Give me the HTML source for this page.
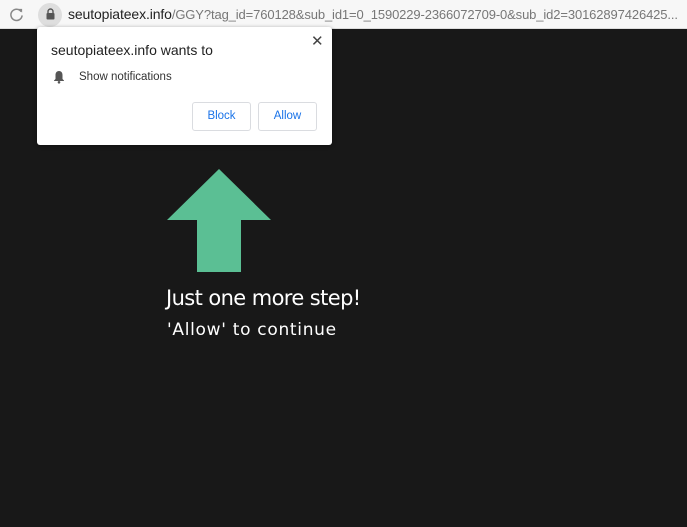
<!DOCTYPE html>
<html><head><meta charset="utf-8"><style>
*{margin:0;padding:0;box-sizing:border-box}
body{width:687px;height:527px;background:#181818;overflow:hidden;position:relative;font-family:"Liberation Sans",sans-serif}
.bar{position:absolute;left:0;top:0;width:687px;height:29px;background:#f7f7f7;border-bottom:1px solid #ddd;overflow:hidden}
.url{position:absolute;left:68px;top:6px;font-size:13px;color:#777;white-space:nowrap;letter-spacing:-0.12px}
.url b{font-weight:normal;color:#222;font-size:14px}
.pill{position:absolute;left:38px;top:3px;width:24px;height:24px;border-radius:12px;background:#dedede}
.pop{position:absolute;left:37px;top:27px;width:295px;height:118px;background:#fff;border-radius:3px;box-shadow:0 1px 4px rgba(0,0,0,.4)}
.t{position:absolute;left:14px;top:15px;font-size:14px;color:#222}
.n{position:absolute;left:42px;top:44px;font-size:11.5px;color:#333}
.x{position:absolute;left:274px;top:5px;font-size:15px;color:#444}
.btn{position:absolute;top:75px;height:29px;border:1px solid #dadce0;border-radius:3px;color:#1a73e8;font-size:11.5px;text-align:center;line-height:27px}
.h1{position:absolute;left:166px;top:286px;color:#fff;font-size:21px;font-family:"DejaVu Sans",sans-serif;letter-spacing:-0.6px}
.h2{position:absolute;left:167px;top:320px;color:#fff;font-size:17px;font-family:"DejaVu Sans",sans-serif;letter-spacing:0.7px}
</style></head><body>
<div class="bar">
<svg style="position:absolute;left:9px;top:7px" width="15" height="15" viewBox="0 0 16 16"><path d="M13 5A6 6 0 1 0 14 9" fill="none" stroke="#888" stroke-width="1.6"/><path d="M10 2h4v4z" fill="#888"/></svg>
<div class="pill"></div>
<svg style="position:absolute;left:46px;top:8px" width="9" height="12" viewBox="0 0 9 12"><path d="M2 5V3.5a2.5 2.5 0 0 1 5 0V5" fill="none" stroke="#555" stroke-width="1.4"/><rect x="0.5" y="5" width="8" height="6.5" rx="1" fill="#555"/></svg>
<div class="url"><b>seutopiateex.info</b>/GGY?tag_id=760128&amp;sub_id1=0_1590229-2366072709-0&amp;sub_id2=30162897426425...</div>
</div>
<div class="pop">
<div class="t">seutopiateex.info wants to</div>
<div class="x">✕</div>
<svg style="position:absolute;left:16px;top:43px" width="12" height="14" viewBox="0 0 12 14"><path d="M6 1C3.5 1 2.5 3 2.5 5v4L1 10.5v.5h10v-.5L9.5 9V5C9.5 3 8.5 1 6 1z" fill="#555"/><circle cx="6" cy="12.3" r="1.3" fill="#555"/></svg>
<div class="n">Show notifications</div>
<div class="btn" style="left:155px;width:59px">Block</div>
<div class="btn" style="left:221px;width:59px">Allow</div>
</div>
<svg style="position:absolute;left:0;top:0" width="687" height="527"><path d="M219 169L271 220H241V272H197V220H167Z" fill="#5bbf94"/></svg>
<div class="h1">Just one more step!</div>
<div class="h2">'Allow' to continue</div>
</body></html>
